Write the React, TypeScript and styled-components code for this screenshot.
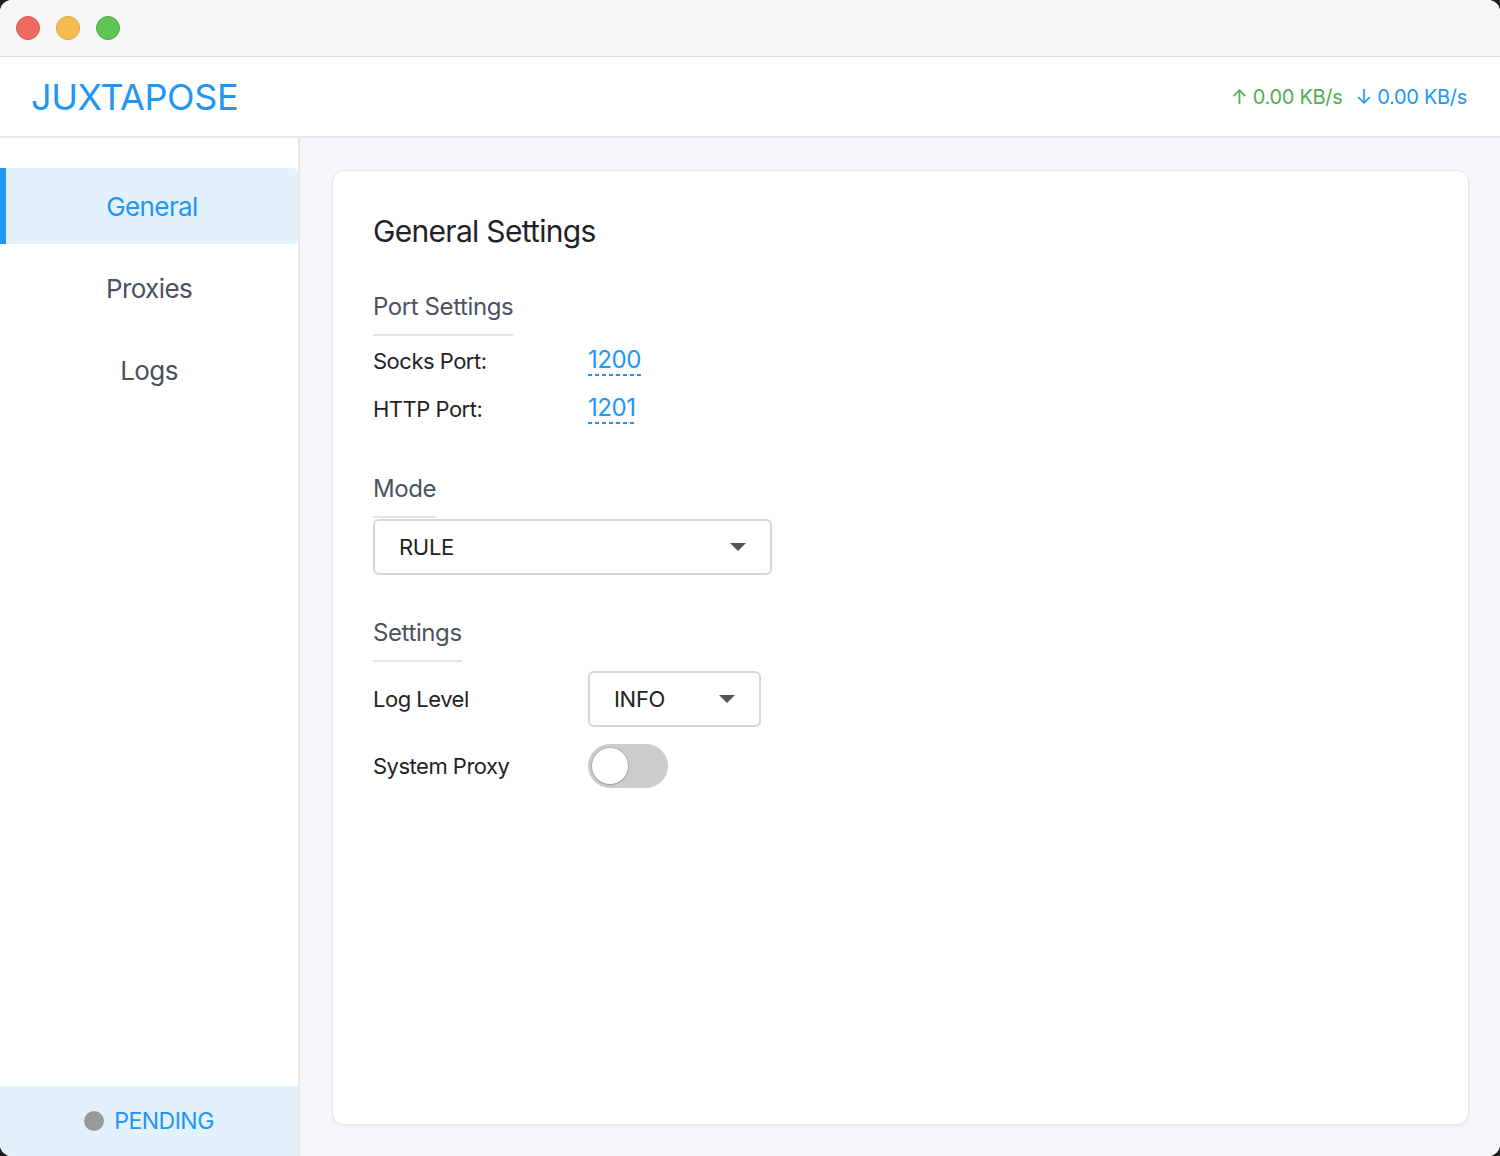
import React, { useState } from "react";
import styled, { createGlobalStyle } from "styled-components";

const Global = createGlobalStyle`
  html, body { margin: 0; padding: 0; background: #1e1e1e; }
  body { font-family: Inter, "Noto Sans", "Liberation Sans", sans-serif; }
  * { box-sizing: border-box; }
`;

const Window = styled.div`
  width: 1500px;
  height: 1156px;
  border-radius: 12px;
  overflow: hidden;
  background: #ffffff;
  display: flex;
  flex-direction: column;
`;

const TitleBar = styled.div`
  height: 57px;
  flex: none;
  background: #f6f6f6;
  border-bottom: 1px solid #dcdcdc;
  display: flex;
  align-items: center;
  gap: 16px;
  padding-left: 16px;
`;

const Light = styled.span<{ $c: string; $b: string }>`
  width: 24px;
  height: 24px;
  border-radius: 50%;
  background: ${(p) => p.$c};
  border: 1px solid ${(p) => p.$b};
`;

const Header = styled.header`
  height: 81px;
  flex: none;
  display: flex;
  align-items: center;
  justify-content: space-between;
  padding: 0 33px 0 31px;
  border-bottom: 2px solid #e6e8ec;
  background: #fff;
`;

const Logo = styled.div`
  font-size: 36px;
  color: #2196f3;
  letter-spacing: -0.4px;
`;

const Speeds = styled.div`
  display: flex;
  gap: 13px;
  font-size: 20px;
`;

const Speed = styled.span<{ $c: string }>`
  color: ${(p) => p.$c};
  display: inline-flex;
  align-items: center;
  letter-spacing: -0.3px;
`;

const Body = styled.div`
  flex: 1;
  display: flex;
  min-height: 0;
`;

const Sidebar = styled.nav`
  width: 300px;
  flex: none;
  background: #fff;
  border-right: 2px solid #e6e8ec;
  display: flex;
  flex-direction: column;
  padding-top: 30px;
`;

const NavList = styled.div`
  flex: 1;
  display: flex;
  flex-direction: column;
  gap: 6px;
`;

const NavItem = styled.div<{ $active?: boolean }>`
  height: 76px;
  display: flex;
  align-items: center;
  justify-content: center;
  font-size: 26px;
  letter-spacing: -0.6px;
  color: ${(p) => (p.$active ? "#2196f3" : "#4a5260")};
  background: ${(p) => (p.$active ? "#e3f1fd" : "transparent")};
  border-left: ${(p) => (p.$active ? "6px solid #2196f3" : "none")};
  border-radius: 0 5px 5px 0;
`;

const Status = styled.div`
  height: 70px;
  flex: none;
  background: #e3f1fd;
  display: flex;
  align-items: center;
  justify-content: center;
  gap: 10px;
  color: #2196f3;
  font-size: 23px;
  letter-spacing: -0.5px;
`;

const Dot = styled.span`
  width: 20px;
  height: 20px;
  border-radius: 50%;
  background: #999;
`;

const Content = styled.main`
  flex: 1;
  background: #f5f6fa;
  padding: 32px 31px 31px 32px;
  display: flex;
`;

const Card = styled.section`
  flex: 1;
  background: #fff;
  border: 1px solid #e4e6ea;
  border-radius: 12px;
  box-shadow: 0 1px 3px rgba(0, 0, 0, 0.05);
  padding: 40px 40px;
  display: flex;
  flex-direction: column;
  align-items: flex-start;
`;

const Title = styled.h1`
  margin: 0;
  font-size: 30px;
  line-height: 40px;
  font-weight: 400;
  color: #1f2328;
  letter-spacing: -0.7px;
`;

const SectionHead = styled.h2<{ $mt: number; $mb: number }>`
  margin: ${(p) => p.$mt}px 0 ${(p) => p.$mb}px;
  font-size: 24px;
  line-height: 32px;
  font-weight: 400;
  color: #4b5361;
  letter-spacing: -0.4px;
  padding-bottom: 11px;
  border-bottom: 2px solid #e1e4e8;
`;

const Row = styled.div<{ $h: number; $mt?: number }>`
  height: ${(p) => p.$h}px;
  margin-top: ${(p) => p.$mt ?? 0}px;
  display: flex;
  align-items: center;
`;

const Label = styled.span`
  width: 215px;
  font-size: 22px;
  color: #1f2328;
  letter-spacing: -0.5px;
`;

const PortValue = styled.span`
  font-size: 24px;
  color: #2196f3;
  letter-spacing: -0.4px;
  line-height: 28px;
  padding-bottom: 2px;
  background-image: linear-gradient(to right, #2196f3 4px, transparent 4px);
  background-size: 7px 2px;
  background-position: left bottom;
  background-repeat: repeat-x;
`;

const Select = styled.div<{ $w: number }>`
  width: ${(p) => p.$w}px;
  height: 56px;
  border: 2px solid #d4d7dc;
  border-radius: 6px;
  display: flex;
  align-items: center;
  justify-content: space-between;
  padding: 0 24px 0 24px;
  font-size: 22px;
  color: #222;
  letter-spacing: -0.3px;
  background: #fff;
`;

const Caret = styled.span`
  width: 0;
  height: 0;
  border-left: 8px solid transparent;
  border-right: 8px solid transparent;
  border-top: 8px solid #555;
`;

const Toggle = styled.button<{ $on: boolean }>`
  width: 80px;
  height: 44px;
  border-radius: 22px;
  border: none;
  padding: 4px;
  background: ${(p) => (p.$on ? "#2196f3" : "#cccccc")};
  display: flex;
  justify-content: ${(p) => (p.$on ? "flex-end" : "flex-start")};
  align-items: center;
  cursor: pointer;
`;

const Knob = styled.span`
  width: 36px;
  height: 36px;
  border-radius: 50%;
  background: #fff;
  box-shadow: 0 0 0 1px rgba(0, 0, 0, 0.12), 0 1px 2px rgba(0, 0, 0, 0.15);
`;

export default function App() {
  const [proxy, setProxy] = useState(false);
  return (
    <>
      <Global />
      <Window>
        <TitleBar>
          <Light $c="#ee6a5f" $b="#d65a50" />
          <Light $c="#f5bd4f" $b="#dca43c" />
          <Light $c="#61c454" $b="#52ab44" />
        </TitleBar>
        <Header>
          <Logo>JUXTAPOSE</Logo>
          <Speeds>
            <Speed $c="#4caf50">↑ 0.00 KB/s</Speed>
            <Speed $c="#2196f3">↓ 0.00 KB/s</Speed>
          </Speeds>
        </Header>
        <Body>
          <Sidebar>
            <NavList>
              <NavItem $active>General</NavItem>
              <NavItem>Proxies</NavItem>
              <NavItem>Logs</NavItem>
            </NavList>
            <Status>
              <Dot />
              PENDING
            </Status>
          </Sidebar>
          <Content>
            <Card>
              <Title>General Settings</Title>
              <SectionHead $mt={40} $mb={1}>Port Settings</SectionHead>
              <Row $h={48}>
                <Label>Socks Port:</Label>
                <PortValue>1200</PortValue>
              </Row>
              <Row $h={48}>
                <Label>HTTP Port:</Label>
                <PortValue>1201</PortValue>
              </Row>
              <SectionHead $mt={40} $mb={1}>Mode</SectionHead>
              <Select $w={399}>
                RULE
                <Caret />
              </Select>
              <SectionHead $mt={42} $mb={9}>Settings</SectionHead>
              <Row $h={56}>
                <Label>Log Level</Label>
                <Select $w={173}>
                  INFO
                  <Caret />
                </Select>
              </Row>
              <Row $h={44} $mt={17}>
                <Label>System Proxy</Label>
                <Toggle $on={proxy} onClick={() => setProxy(!proxy)}>
                  <Knob />
                </Toggle>
              </Row>
            </Card>
          </Content>
        </Body>
      </Window>
    </>
  );
}
